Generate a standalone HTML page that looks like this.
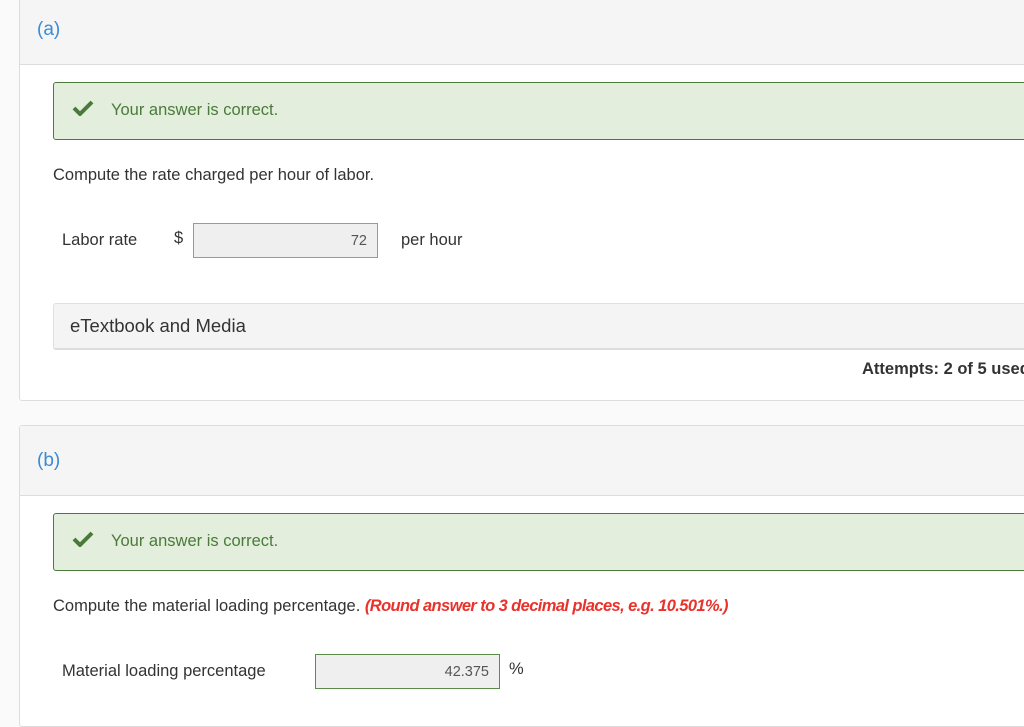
<!DOCTYPE html>
<html><head><style>
body{margin:0;width:1024px;height:696px;overflow:hidden;background:#fafafa;font-family:"Liberation Sans",sans-serif;color:#333;position:relative}
.a{position:absolute}
.card{position:absolute;left:19px;right:-5px;background:#fff;border:1px solid #ddd;border-radius:3px}
.hdr{position:absolute;left:0;right:0;top:0;background:#f5f5f5;border-bottom:1px solid #ddd}
.lbl{color:#3a8ad8;font-size:19px;position:absolute;left:17px}
.ok{position:absolute;left:53px;right:-5px;height:56px;background:#e3efdc;border:1px solid #4c7a3d;border-radius:3px}
.ok svg{position:absolute;left:18px;top:17px}
.ok span{position:absolute;left:57px;top:18px;color:#4a7a3a;font-size:16.5px}
.t{position:absolute;font-size:16.5px;color:#333;white-space:nowrap}
.inp{position:absolute;background:#efefef;border:1px solid #5b8a4a;height:35px;box-sizing:border-box;text-align:right;font-size:14.5px;color:#555;padding:9px 10px 0 0}
</style></head><body>
<div class="card" style="top:-3px;height:402px">
 <div class="hdr" style="height:66px"><span class="lbl" style="top:21px">(a)</span></div>
</div>
<div class="ok" style="top:82px"><svg width="22" height="16" viewBox="0 0 22 16"><path d="M2 8 L8 14 L20 2" stroke="#4a7a3a" stroke-width="4" fill="none"/></svg><span>Your answer is correct.</span></div>
<div class="t" style="left:53px;top:166px">Compute the rate charged per hour of labor.</div>
<div class="t" style="left:62px;top:231px">Labor rate</div>
<div class="t" style="left:174px;top:229px">$</div>
<div class="inp" style="left:193px;top:223px;width:185px;border-color:#999">72</div>
<div class="t" style="left:401px;top:231px">per hour</div>
<div class="a" style="left:53px;right:-5px;top:303px;height:44px;background:#f4f4f4;border:1px solid #e0e0e0;border-bottom:2px solid #ddd;border-radius:3px"><span class="t" style="left:16px;top:11px;font-size:18.5px">eTextbook and Media</span></div>
<div class="t" style="left:862px;top:360px;font-weight:bold;font-size:16.5px">Attempts: 2 of 5 used</div>
<div class="card" style="top:425px;height:300px">
 <div class="hdr" style="height:69px"><span class="lbl" style="top:24px">(b)</span></div>
</div>
<div class="ok" style="top:513px"><svg width="22" height="16" viewBox="0 0 22 16"><path d="M2 8 L8 14 L20 2" stroke="#4a7a3a" stroke-width="4" fill="none"/></svg><span>Your answer is correct.</span></div>
<div class="t" style="left:53px;top:597px">Compute the material loading percentage. <i style="color:#e8322b;font-weight:bold;letter-spacing:-0.6px">(Round answer to 3 decimal places, e.g. 10.501%.)</i></div>
<div class="t" style="left:62px;top:662px">Material loading percentage</div>
<div class="inp" style="left:315px;top:654px;width:185px">42.375</div>
<div class="t" style="left:509px;top:660px">%</div>
</body></html>
